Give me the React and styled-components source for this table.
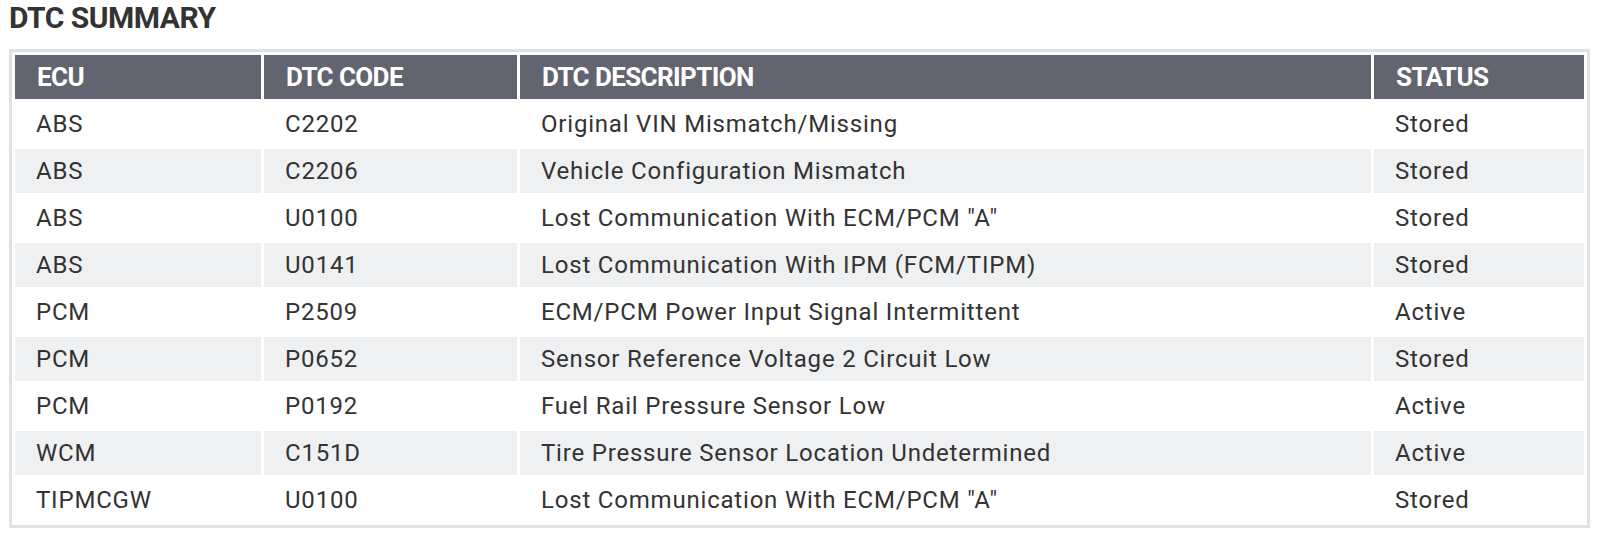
import * as React from 'react';
import styled, { createGlobalStyle } from 'styled-components';

const GlobalStyle = createGlobalStyle`
  body {
    margin: 0;
    background: #ffffff;
    font-family: Roboto, "Liberation Sans", sans-serif;
  }
`;

const Page = styled.div`
  padding: 0 10px 0 9px;
`;

const Title = styled.h2`
  margin: 0;
  padding-top: 1px;
  height: 48px;
  font-size: 30px;
  font-weight: 700;
  letter-spacing: -0.5px;
  line-height: 34px;
  color: #333333;
`;

const Table = styled.table`
  width: 1581px;
  border: 3px solid #dfe1e8;
  border-collapse: separate;
  border-spacing: 3px;
  table-layout: fixed;
`;

const HeadCell = styled.th`
  height: 44px;
  padding: 0 0 0 22px;
  background: #62646f;
  color: #ffffff;
  font-size: 26px;
  font-weight: 700;
  letter-spacing: -0.6px;
  text-align: left;
`;

const Row = styled.tr`
  background: ${(p) => (p.$striped ? '#eff0f2' : '#ffffff')};
`;

const Cell = styled.td`
  height: 44px;
  padding: 0 0 0 21px;
  font-size: 24px;
  letter-spacing: 0.8px;
  color: #333333;
  background: inherit;
`;

const rows = [
  ['ABS', 'C2202', 'Original VIN Mismatch/Missing', 'Stored'],
  ['ABS', 'C2206', 'Vehicle Configuration Mismatch', 'Stored'],
  ['ABS', 'U0100', 'Lost Communication With ECM/PCM "A"', 'Stored'],
  ['ABS', 'U0141', 'Lost Communication With IPM (FCM/TIPM)', 'Stored'],
  ['PCM', 'P2509', 'ECM/PCM Power Input Signal Intermittent', 'Active'],
  ['PCM', 'P0652', 'Sensor Reference Voltage 2 Circuit Low', 'Stored'],
  ['PCM', 'P0192', 'Fuel Rail Pressure Sensor Low', 'Active'],
  ['WCM', 'C151D', 'Tire Pressure Sensor Location Undetermined', 'Active'],
  ['TIPMCGW', 'U0100', 'Lost Communication With ECM/PCM "A"', 'Stored'],
];

export default function App() {
  return (
    <Page>
      <GlobalStyle />
      <Title>DTC SUMMARY</Title>
      <Table>
        <colgroup>
          <col style={{ width: 246 }} />
          <col style={{ width: 253 }} />
          <col style={{ width: 851 }} />
          <col style={{ width: 210 }} />
        </colgroup>
        <thead>
          <tr>
            <HeadCell>ECU</HeadCell>
            <HeadCell>DTC CODE</HeadCell>
            <HeadCell>DTC DESCRIPTION</HeadCell>
            <HeadCell>STATUS</HeadCell>
          </tr>
        </thead>
        <tbody>
          {rows.map((r, i) => (
            <Row key={i} $striped={i % 2 === 1}>
              {r.map((c, j) => <Cell key={j}>{c}</Cell>)}
            </Row>
          ))}
        </tbody>
      </Table>
    </Page>
  );
}
